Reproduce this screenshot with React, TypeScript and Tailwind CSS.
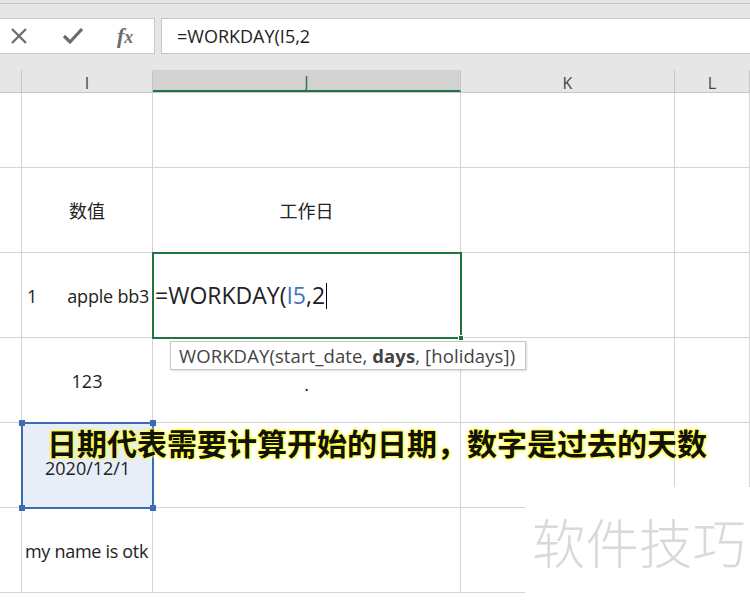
import React from "react";

const cols = [22, 131, 308, 214, 75];
const rowHeights = [75, 85, 85, 85, 85, 85];

const latin = "font-['Open_Sans','Noto_Sans_CJK_SC',sans-serif]";

function Cell({ h, w, children, className = "" }: { h: number; w: number; children?: React.ReactNode; className?: string }) {
  return (
    <div
      className={`relative shrink-0 border-r border-b border-[#d4d4d4] ${className}`}
      style={{ width: w, height: h }}
    >
      {children}
    </div>
  );
}

function Handle({ pos, color }: { pos: string; color: string }) {
  return <div className={`absolute w-[6px] h-[6px] ${pos} ${color}`} />;
}

export default function App() {
  return (
    <div className={`relative w-[750px] h-[600px] overflow-hidden bg-white ${latin}`}>
      {/* top toolbar strip */}
      <div className="h-[70px] bg-[#e6e6e6] flex flex-col">
        <div className="h-[3px] border-b border-[#c8c8c8] mt-[1px]" />
        <div className="flex mt-[14px] h-[36px]">
          <div className="w-[155px] bg-white border border-l-0 border-[#c6c6c6] flex items-center">
            <svg width="20" height="20" viewBox="0 0 20 20" className="ml-[9px]">
              <path d="M3 3 L17 17 M17 3 L3 17" stroke="#6b6b6b" strokeWidth="2.2" />
            </svg>
            <svg width="22" height="20" viewBox="0 0 22 20" className="ml-[33px]">
              <path d="M2 10 L8 16 L20 3" stroke="#6b6b6b" strokeWidth="3.2" fill="none" />
            </svg>
            <span className="ml-[33px] text-[22px] italic text-[#6b6b6b] font-['Liberation_Serif',serif] font-bold leading-none">
              f<span className="text-[18px]">x</span>
            </span>
          </div>
          <div className="ml-[6px] flex-1 bg-white border border-r-0 border-[#c6c6c6] flex items-center pl-[15px] text-[18px] text-[#222]">
            =WORKDAY(I5,2
          </div>
        </div>
      </div>

      {/* column headers */}
      <div className="flex h-[23px] bg-[#e6e6e6] border-b border-[#c6c6c6] text-[16px] text-[#444]">
        {cols.map((w, i) => (
          <div
            key={i}
            style={{ width: w }}
            className={`shrink-0 flex items-center justify-center pt-[3px] border-r border-[#c6c6c6] ${
              i === 2 ? "bg-[#d2d2d2] border-b-2 border-b-[#217346] text-[#217346]" : ""
            }`}
          >
            {["", "I", "J", "K", "L"][i]}
          </div>
        ))}
      </div>

      {/* grid rows */}
      <div className="flex flex-col text-[18px] text-[#222]">
        {rowHeights.map((h, r) => (
          <div key={r} className="flex">
            {cols.map((w, c) => {
              let content: React.ReactNode = null;
              let extra = "";
              if (r === 1 && c === 1) content = <div className="h-full flex items-center justify-center pt-[2px]">数值</div>;
              if (r === 1 && c === 2) content = <div className="h-full flex items-center justify-center pt-[2px]">工作日</div>;
              if (r === 2 && c === 1)
                content = (
                  <div className="h-full flex items-center pt-[2px]">
                    <span className="ml-[5px]">1</span>
                    <span className="ml-[30px] tracking-[-0.2px]">apple bb3</span>
                  </div>
                );
              if (r === 2 && c === 2) {
                extra = "z-10";
                content = (
                  <div className="absolute -left-[1px] -top-[1px] w-[310px] h-[87px] border-2 border-[#217346] flex items-center pl-[1px] text-[23px]">
                    <span>=WORKDAY(</span>
                    <span className="text-[#4472c4]">I5</span>
                    <span>,2</span>
                    <span className="w-[1px] h-[26px] bg-black ml-[1px]" />
                    <Handle pos="-right-[4px] -bottom-[4px]" color="bg-[#217346] border border-white" />
                  </div>
                );
              }
              if (r === 3 && c === 1) content = <div className="h-full flex items-center justify-center pt-[3px]">123</div>;
              if (r === 3 && c === 2) content = <div className="h-full flex items-center justify-center pt-[8px]">.</div>;
              if (r === 4 && c === 1) {
                extra = "bg-[#e8eef8] z-10";
                content = (
                  <div className="absolute -left-[1px] -top-[1px] w-[133px] h-[87px] border-2 border-[#3b6cb4]">
                    <div className="absolute left-[22px] top-[31px]">2020/12/1</div>
                    <Handle pos="-left-[4px] -top-[4px]" color="bg-[#3b6cb4]" />
                    <Handle pos="-right-[4px] -top-[4px]" color="bg-[#3b6cb4]" />
                    <Handle pos="-left-[4px] -bottom-[4px]" color="bg-[#3b6cb4]" />
                    <Handle pos="-right-[4px] -bottom-[4px]" color="bg-[#3b6cb4]" />
                  </div>
                );
              }
              if (r === 5 && c === 1)
                content = <div className="h-full flex items-center pl-[3px] pt-[2px] tracking-[-0.3px]">my name is otk</div>;
              return (
                <Cell key={c} h={h} w={w} className={extra}>
                  {content}
                </Cell>
              );
            })}
          </div>
        ))}
      </div>

      {/* function tooltip */}
      <div className="absolute left-[170px] top-[341px] w-[356px] h-[29px] bg-white border border-[#c6c6c6] shadow-[1px_1px_2px_rgba(0,0,0,0.15)] flex items-center pl-[8px] text-[18.5px] tracking-[0.1px] text-[#444] z-20">
        WORKDAY(start_date,&nbsp;<b>days</b>, [holidays])
      </div>

      {/* caption */}
      <div className="absolute left-[47px] top-[422px] z-30 text-[30px] leading-[40px] text-[#111] font-['Noto_Sans_CJK_SC',sans-serif] font-semibold [text-shadow:0_0_2px_#ffff00,0_0_3px_#ffff00,0_0_4px_#ffff66] whitespace-nowrap">
        日期代表需要计算开始的日期，数字是过去的天数
      </div>

      {/* watermark */}
      <div className="absolute left-[525px] top-[487px] w-[225px] h-[113px] bg-white z-20">
        <div className="ml-[7px] mt-[22px] text-[53.5px] leading-[64px] text-[#d9d9d9] font-['Noto_Sans_CJK_SC',sans-serif] font-light whitespace-nowrap">
          软件技巧
        </div>
      </div>
    </div>
  );
}
